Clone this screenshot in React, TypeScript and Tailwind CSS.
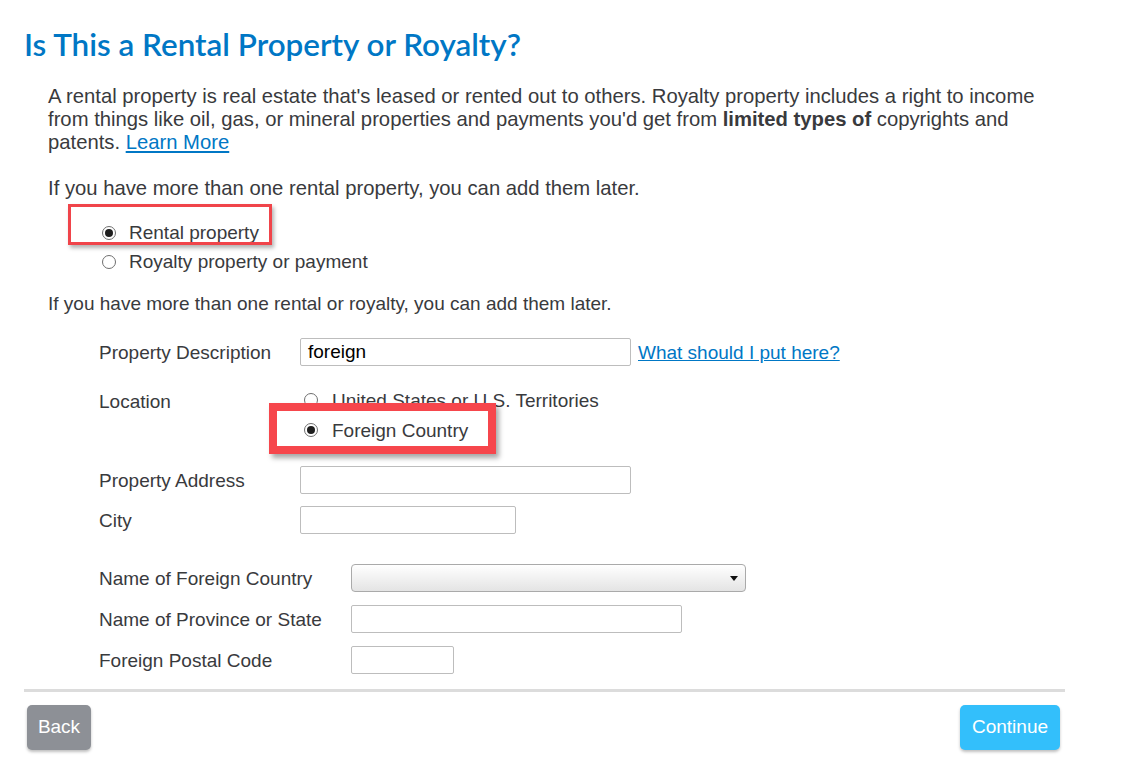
import React from 'react';

const FONT = { fontFamily: '"Liberation Sans", Arial, sans-serif' };

// native-looking radio dot
const Radio = ({ checked = false }: { checked?: boolean }) => (
  <span className="inline-flex h-[14px] w-[14px] shrink-0 items-center justify-center rounded-full border border-[#6f6f6f] bg-white">
    {checked && <span className="h-[8px] w-[8px] rounded-full bg-[#1e1e1e]" />}
  </span>
);

const TextBox = ({ width, value = '' }: { width: string; value?: string }) => (
  <div
    className={`${width} h-[28px] rounded-[2px] border border-[#bdbdbd] bg-white px-[7px] text-[19px] leading-[26px] text-black`}
  >
    {value}
  </div>
);

export default function App() {
  return (
    <div className="min-h-screen bg-white text-[#393a3d]" style={FONT}>
      <div className="w-[1065px] pl-6 pt-[25px]">
        {/* Title */}
        <h1
          className="text-[31.4px] leading-[38px] font-semibold text-[#0077c5]"
          style={{ fontFamily: 'Lato, "Open Sans", sans-serif' }}
        >
          Is This a Rental Property or Royalty?
        </h1>

        <div className="pl-6 pt-[22px] text-[19px] leading-[23px]">
          <p className="w-[1000px] text-[20.25px]">
            A rental property is real estate that's leased or rented out to others. Royalty property includes a right to income
            from things like oil, gas, or mineral properties and payments you'd get from <b>limited types of</b> copyrights and
            patents. <a className="text-[#0077c5] underline">Learn More</a>
          </p>

          <p className="mt-[23px] text-[20.25px]">If you have more than one rental property, you can add them later.</p>

          {/* Rental / Royalty choice */}
          <div className="relative mt-[18px] flex flex-col pl-[54px]">
            <label className="flex h-[29px] items-center gap-[13px]">
              <Radio checked />
              <span>Rental property</span>
            </label>
            <label className="flex h-[29px] items-center gap-[13px]">
              <Radio />
              <span>Royalty property or payment</span>
            </label>
            <div className="pointer-events-none absolute left-[20px] top-[-14px] h-[41px] w-[204px] border-[3px] border-[#f0444a] shadow-[2px_3px_4px_rgba(0,0,0,0.3)]" />
          </div>

          <p className="mt-[16px]">If you have more than one rental or royalty, you can add them later.</p>

          {/* Property form */}
          <div className="mt-[23px] flex flex-col pl-[51px]">
            <div className="flex items-center">
              <span className="w-[201px]">Property Description</span>
              <TextBox width="w-[331px]" value="foreign" />
              <a className="ml-[7px] text-[#0077c5] underline">What should I put here?</a>
            </div>

            <div className="mt-[19px] flex">
              <span className="w-[201px] pt-[5px]">Location</span>
              <div className="relative flex flex-col pl-[4px]">
                <label className="flex h-[30px] items-center gap-[14px]">
                  <Radio />
                  <span>United States or U.S. Territories</span>
                </label>
                <label className="flex h-[30px] items-center gap-[14px]">
                  <Radio checked />
                  <span>Foreign Country</span>
                </label>
                <div className="pointer-events-none absolute left-[-31px] top-[18px] h-[51px] w-[227px] border-[8px] border-[#f6464c] shadow-[3px_4px_5px_rgba(0,0,0,0.35)]" />
              </div>
            </div>

            <div className="mt-[21px] flex items-center">
              <span className="w-[201px]">Property Address</span>
              <TextBox width="w-[331px]" />
            </div>
            <div className="mt-[12px] flex items-center">
              <span className="w-[201px]">City</span>
              <TextBox width="w-[216px]" />
            </div>

            <div className="mt-[30px] flex items-center">
              <span className="w-[252px]">Name of Foreign Country</span>
              <div className="flex h-[28px] w-[395px] items-center justify-end rounded-[4px] border border-[#aaaaaa] bg-gradient-to-b from-white to-[#e4e4e4] pr-[7px]">
                <svg width="8" height="5" viewBox="0 0 8 5">
                  <path d="M0 0h8L4 5z" fill="#111" />
                </svg>
              </div>
            </div>
            <div className="mt-[13px] flex items-center">
              <span className="w-[252px]">Name of Province or State</span>
              <TextBox width="w-[331px]" />
            </div>
            <div className="mt-[13px] flex items-center">
              <span className="w-[252px]">Foreign Postal Code</span>
              <TextBox width="w-[103px]" />
            </div>
          </div>
        </div>

        <div className="mt-[15px] h-[3px] w-[1041px] bg-[#dcdcdc]" />

        <div className="mt-[13px] flex w-[1041px] justify-between pl-[3px] pr-[5px]">
          <button className="h-[45px] w-[64px] rounded-[5px] bg-[#8d9096] text-[19px] text-white shadow-[0_2px_3px_rgba(0,0,0,0.25)]">
            Back
          </button>
          <button className="h-[45px] w-[100px] rounded-[5px] bg-[#33bffb] text-[19px] text-white shadow-[0_2px_3px_rgba(0,0,0,0.25)]">
            Continue
          </button>
        </div>
      </div>
    </div>
  );
}
